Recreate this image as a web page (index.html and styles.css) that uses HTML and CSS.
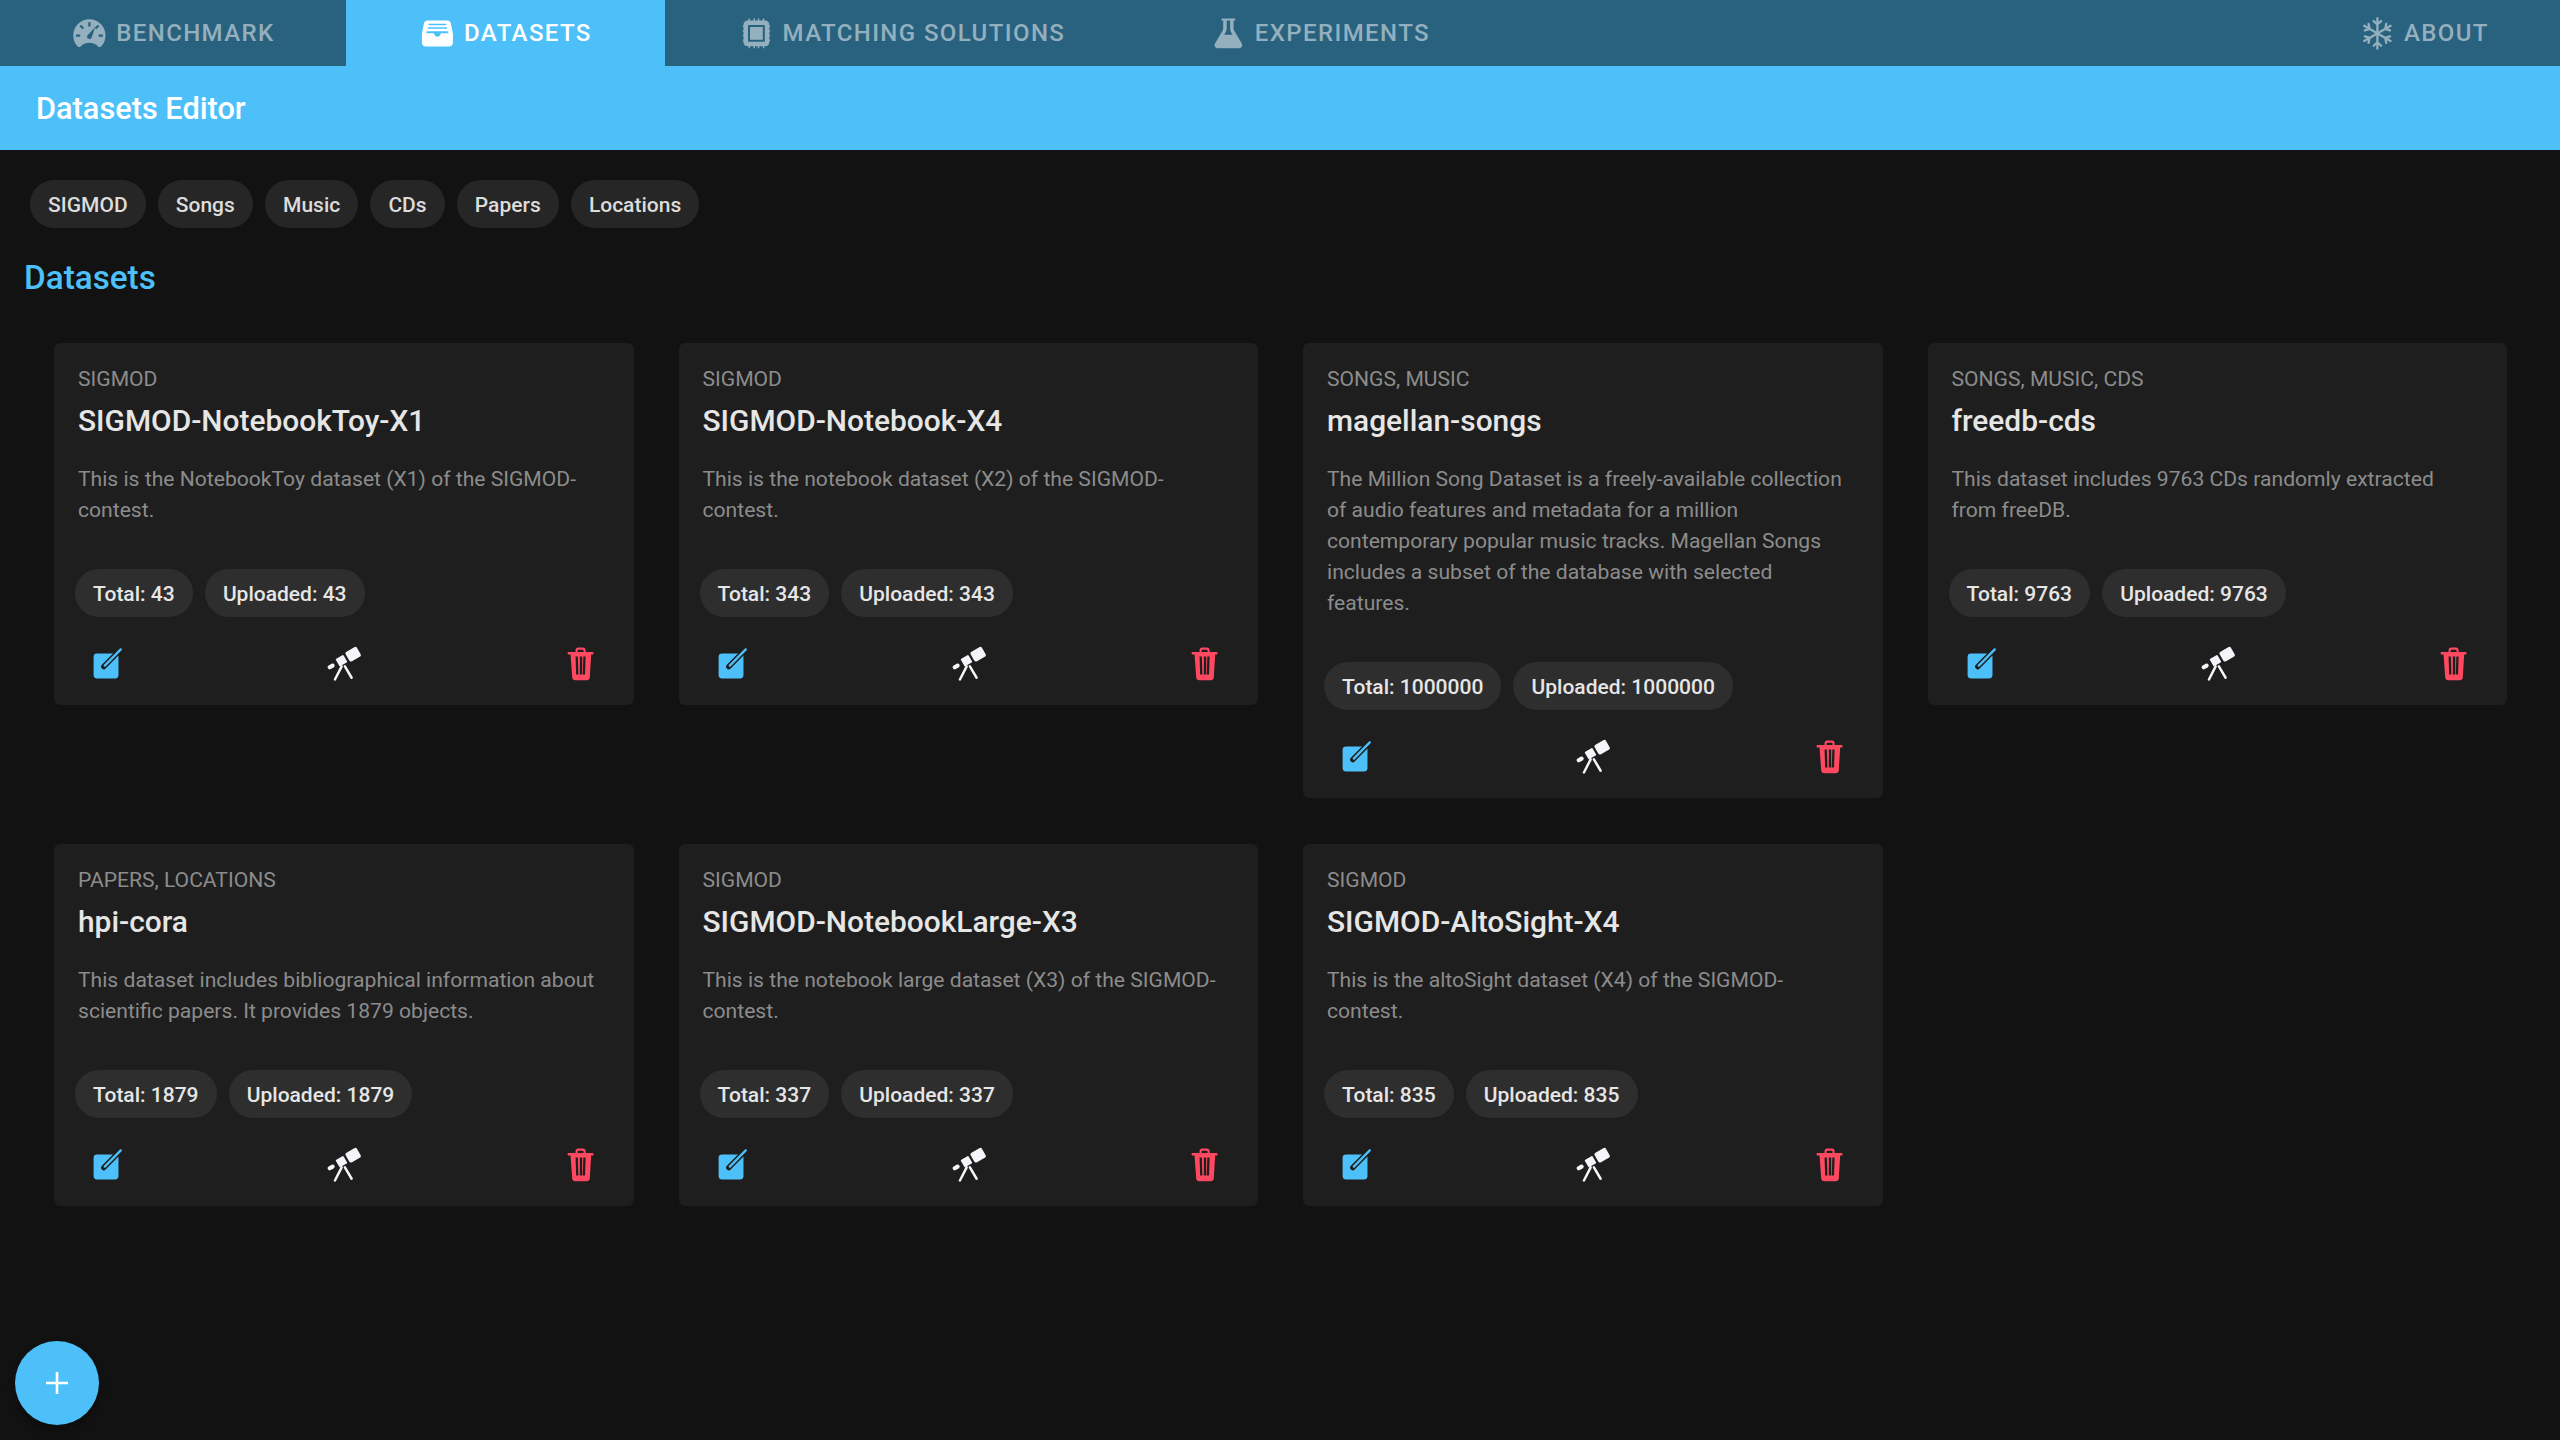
FILE: index.html
```html
<!DOCTYPE html>
<html>
<head>
  <title>Datasets Editor</title>
  <link rel="stylesheet" href="styles.css">
</head>
<body>
  <svg class="defs" width="0" height="0">
    <symbol id="i-speedometer" viewBox="0 0 512 512">
      <path fill-rule="evenodd" d="M256 60C132 60 32 160 32 284c0 58 20 112 58 150 12 12 30 18 44 4 32-34 72-52 122-52s90 18 122 52c14 14 32 8 44-4 38-38 58-92 58-150C480 160 380 60 256 60zM240 100h32v60h-32zM118 158l22-22 42 42-22 22zM372 136l22 22-42 42-22-22zM68 272h60v30H68zM384 272h60v30h-60zM336 166l-48 146c-6 18-26 28-44 20-20-8-28-30-16-48z"/>
    </symbol>
    <symbol id="i-tray" viewBox="0 0 512 512">
      <path fill-rule="evenodd" d="M118 75h276c24 0 42 14 48 36l30 150v120c0 32-24 56-56 56H96c-32 0-56-24-56-56V261l30-150c6-22 24-36 48-36zM132 122v20h248v-20zM122 172v20h268v-20zM104 226v28h102l18 36c3 6 8 10 16 10h32c8 0 13-4 16-10l18-36h102v-28z"/>
    </symbol>
    <symbol id="i-chip" viewBox="0 0 512 512">
      <path d="M146 48h20v40h-20zM216 48h20v40h-20zM276 48h20v40h-20zM346 48h20v40h-20zM146 424h20v40h-20zM216 424h20v40h-20zM276 424h20v40h-20zM346 424h20v40h-20zM68 146h40v20H68zM68 216h40v20H68zM68 276h40v20H68zM68 346h40v20H68zM404 146h40v20h-40zM404 216h40v20h-40zM404 276h40v20h-40zM404 346h40v20h-40z"/>
      <path fill-rule="evenodd" d="M134 76h244c32 0 58 26 58 58v244c0 32-26 58-58 58H134c-32 0-58-26-58-58V134c0-32 26-58 58-58zM139 139v234h234V139zM167 167h178v178H167z"/>
    </symbol>
    <symbol id="i-flask" viewBox="0 0 512 512">
      <path fill-rule="evenodd" d="M172 48h168c8 0 14 6 14 14s-6 14-14 14h-12v110c0 14 4 26 11 37l100 165c24 40 0 76-46 76H119c-46 0-70-36-46-76l100-165c7-11 11-23 11-37V76h-12c-8 0-14-6-14-14s6-14 14-14zM232 76v110c0 24-6 44-19 64l-16 26h118l-16-26c-13-20-19-40-19-64V76z"/>
    </symbol>
    <symbol id="i-snow" viewBox="0 0 512 512">
      <g fill="none" stroke="currentColor" stroke-width="32" stroke-linecap="round" stroke-linejoin="round">
        <path d="M256 44v424M204 84l52 46 52-46M204 428l52-46 52 46"/>
        <path transform="rotate(60 256 256)" d="M256 44v424M204 84l52 46 52-46M204 428l52-46 52 46"/>
        <path transform="rotate(120 256 256)" d="M256 44v424M204 84l52 46 52-46M204 428l52-46 52 46"/>
      </g>
    </symbol>
    <symbol id="i-create" viewBox="0 0 512 512">
      <rect x="67" y="110" width="362" height="362" rx="50"/>
      <path d="M462 50L215 300" fill="none" stroke="#1e1e1e" stroke-width="78" stroke-linecap="round"/>
      <path d="M462 50L230 285" fill="none" stroke="currentColor" stroke-width="34" stroke-linecap="round"/>
    </symbol>
    <symbol id="i-telescope" viewBox="0 0 512 512">
      <rect x="-95" y="-80" width="190" height="160" rx="30" transform="translate(395 120) rotate(-30)"/>
      <rect x="-65" y="-62" width="130" height="124" rx="14" transform="translate(225 212) rotate(-30)"/>
      <rect x="-55" y="-30" width="110" height="60" rx="30" transform="translate(75 298) rotate(-30)"/>
      <path d="M228 296L130 487M275 296l98 166" fill="none" stroke="currentColor" stroke-width="36" stroke-linecap="round"/>
    </symbol>
    <symbol id="i-trash" viewBox="0 0 512 512">
      <path fill-rule="evenodd" d="M78 86h105V60c0-20 16-37 37-37h72c21 0 37 17 37 37v26h105c6 0 10 9 10 19s-4 20-10 20h-24l-20 332c-2 24-20 40-44 40H178c-24 0-42-16-44-40l-24-332H78c-6 0-11-9-11-20s5-19 11-19zM213 86h86V64c0-6-4-10-10-10h-66c-6 0-10 4-10 10zM183 153l8 262h33l-8-262zM245 153v262h34V153zM296 153l-8 262h33l8-262z"/>
    </symbol>
  </svg>

  <nav class="tabs">
    <a class="tab tab-benchmark"><svg class="tab-icon"><use href="#i-speedometer"/></svg>BENCHMARK</a>
    <a class="tab tab-datasets active"><svg class="tab-icon"><use href="#i-tray"/></svg>DATASETS</a>
    <a class="tab tab-solutions"><svg class="tab-icon"><use href="#i-chip"/></svg>MATCHING SOLUTIONS</a>
    <a class="tab tab-experiments"><svg class="tab-icon"><use href="#i-flask"/></svg>EXPERIMENTS</a>
    <a class="tab tab-about"><svg class="tab-icon"><use href="#i-snow"/></svg>ABOUT</a>
  </nav>

  <header class="toolbar">Datasets Editor</header>

  <div class="filters">
    <span class="chip">SIGMOD</span>
    <span class="chip">Songs</span>
    <span class="chip">Music</span>
    <span class="chip">CDs</span>
    <span class="chip">Papers</span>
    <span class="chip">Locations</span>
  </div>

  <h2 class="section-title">Datasets</h2>

  <main class="grid">
    <article class="card">
      <div class="card-sub">SIGMOD</div>
      <h3 class="card-title">SIGMOD-NotebookToy-X1</h3>
      <p class="card-desc">This is the NotebookToy dataset (X1) of the SIGMOD-contest.</p>
      <div class="counts"><span class="chip">Total: 43</span><span class="chip">Uploaded: 43</span></div>
      <div class="actions">
        <button class="btn edit"><svg><use href="#i-create"/></svg></button>
        <button class="btn scope"><svg><use href="#i-telescope"/></svg></button>
        <button class="btn del"><svg><use href="#i-trash"/></svg></button>
      </div>
    </article>
    <article class="card">
      <div class="card-sub">SIGMOD</div>
      <h3 class="card-title">SIGMOD-Notebook-X4</h3>
      <p class="card-desc">This is the notebook dataset (X2) of the SIGMOD-contest.</p>
      <div class="counts"><span class="chip">Total: 343</span><span class="chip">Uploaded: 343</span></div>
      <div class="actions">
        <button class="btn edit"><svg><use href="#i-create"/></svg></button>
        <button class="btn scope"><svg><use href="#i-telescope"/></svg></button>
        <button class="btn del"><svg><use href="#i-trash"/></svg></button>
      </div>
    </article>
    <article class="card">
      <div class="card-sub">SONGS, MUSIC</div>
      <h3 class="card-title">magellan-songs</h3>
      <p class="card-desc">The Million Song Dataset is a freely-available collection of audio features and metadata for a million contemporary popular music tracks. Magellan Songs includes a subset of the database with selected features.</p>
      <div class="counts"><span class="chip">Total: 1000000</span><span class="chip">Uploaded: 1000000</span></div>
      <div class="actions">
        <button class="btn edit"><svg><use href="#i-create"/></svg></button>
        <button class="btn scope"><svg><use href="#i-telescope"/></svg></button>
        <button class="btn del"><svg><use href="#i-trash"/></svg></button>
      </div>
    </article>
    <article class="card">
      <div class="card-sub">SONGS, MUSIC, CDS</div>
      <h3 class="card-title">freedb-cds</h3>
      <p class="card-desc">This dataset includes 9763 CDs randomly extracted from freeDB.</p>
      <div class="counts"><span class="chip">Total: 9763</span><span class="chip">Uploaded: 9763</span></div>
      <div class="actions">
        <button class="btn edit"><svg><use href="#i-create"/></svg></button>
        <button class="btn scope"><svg><use href="#i-telescope"/></svg></button>
        <button class="btn del"><svg><use href="#i-trash"/></svg></button>
      </div>
    </article>
    <article class="card">
      <div class="card-sub">PAPERS, LOCATIONS</div>
      <h3 class="card-title">hpi-cora</h3>
      <p class="card-desc">This dataset includes bibliographical information about scientific papers. It provides 1879 objects.</p>
      <div class="counts"><span class="chip">Total: 1879</span><span class="chip">Uploaded: 1879</span></div>
      <div class="actions">
        <button class="btn edit"><svg><use href="#i-create"/></svg></button>
        <button class="btn scope"><svg><use href="#i-telescope"/></svg></button>
        <button class="btn del"><svg><use href="#i-trash"/></svg></button>
      </div>
    </article>
    <article class="card">
      <div class="card-sub">SIGMOD</div>
      <h3 class="card-title">SIGMOD-NotebookLarge-X3</h3>
      <p class="card-desc">This is the notebook large dataset (X3) of the SIGMOD-contest.</p>
      <div class="counts"><span class="chip">Total: 337</span><span class="chip">Uploaded: 337</span></div>
      <div class="actions">
        <button class="btn edit"><svg><use href="#i-create"/></svg></button>
        <button class="btn scope"><svg><use href="#i-telescope"/></svg></button>
        <button class="btn del"><svg><use href="#i-trash"/></svg></button>
      </div>
    </article>
    <article class="card">
      <div class="card-sub">SIGMOD</div>
      <h3 class="card-title">SIGMOD-AltoSight-X4</h3>
      <p class="card-desc">This is the altoSight dataset (X4) of the SIGMOD-contest.</p>
      <div class="counts"><span class="chip">Total: 835</span><span class="chip">Uploaded: 835</span></div>
      <div class="actions">
        <button class="btn edit"><svg><use href="#i-create"/></svg></button>
        <button class="btn scope"><svg><use href="#i-telescope"/></svg></button>
        <button class="btn del"><svg><use href="#i-trash"/></svg></button>
      </div>
    </article>
  </main>

  <button class="fab"><svg viewBox="0 0 24 24"><path d="M12 1v22M1 12h22"/></svg></button>
</body>
</html>
```

FILE: styles.css
```css
* {
  box-sizing: border-box;
}

body {
  margin: 0;
  min-height: 1440px;
  background: #121212;
  font-family: Roboto, "Liberation Sans", sans-serif;
  overflow: hidden;
}

.defs {
  display: block;
  height: 0;
}

/* top tabs */
.tabs {
  display: flex;
  height: 66px;
  background: #29627e;
}

.tab {
  display: flex;
  align-items: center;
  justify-content: center;
  gap: 8px;
  color: #94b0be;
  font-size: 24px;
  font-weight: 500;
  letter-spacing: 1.4px;
}

.tab-icon {
  width: 36.8px;
  height: 36.8px;
  fill: currentColor;
}

.tab-benchmark { width: 346px; }
.tab-datasets { width: 319px; }
.tab-solutions { width: 473px; }
.tab-experiments { width: 364px; }
.tab-about { margin-left: auto; width: 272px; }

.tab.active {
  background: #4dc0f9;
  color: #fff;
}

.toolbar {
  height: 84px;
  padding: 2px 0 0 36px;
  background: #4dc0f9;
  color: #fff;
  font-size: 30.72px;
  font-weight: 500;
  line-height: 82px;
}

/* chips */
.filters {
  display: flex;
  gap: 12px;
  padding: 30px 0 0 30px;
}

.chip {
  display: inline-flex;
  align-items: center;
  height: 48px;
  padding: 1px 18.1px 0;
  border-radius: 26px;
  background: #262626;
  color: #dcdcdc;
  font-size: 21px;
  font-weight: 500;
}

.section-title {
  margin: 0;
  padding: 30px 0 0 24px;
  color: #4dc0f9;
  font-size: 33.28px;
  font-weight: 500;
  line-height: 40px;
}

/* cards */
.grid {
  display: grid;
  grid-template-columns: repeat(4, 579.5px);
  column-gap: 45px;
  row-gap: 46px;
  align-items: start;
  padding: 45px 0 0 54px;
}

.card {
  padding-top: 24px;
  border-radius: 6px;
  background: #1e1e1e;
}

.card-sub {
  padding: 0 24px;
  color: #8c8c8c;
  font-size: 21.12px;
  line-height: 24px;
}

.card-title {
  margin: 12px 0 0;
  padding: 0 24px;
  color: #e6e6e6;
  font-size: 29.9px;
  font-weight: 500;
  line-height: 36px;
}

.card-desc {
  margin: 24px 0 0;
  padding: 0 24px;
  color: #8c8c8c;
  font-size: 21.12px;
  line-height: 31px;
}

.counts {
  display: flex;
  gap: 12px;
  margin-top: 44px;
  padding-left: 21px;
}

.counts .chip {
  background: #2e2e2e;
  color: #e6e6e6;
}

.actions {
  display: flex;
  justify-content: space-between;
  margin-top: 23px;
  padding: 0 20px 17px 20px;
}

.btn {
  display: flex;
  align-items: center;
  justify-content: center;
  width: 66px;
  height: 48px;
  padding: 0;
  border: 0;
  background: none;
}

.btn svg {
  width: 35.2px;
  height: 35.2px;
  fill: currentColor;
}

.edit { color: #4dc0f9; }
.scope { color: #f4f5f8; }
.del { color: #ff4961; }

.fab {
  position: fixed;
  left: 15px;
  bottom: 15px;
  display: flex;
  align-items: center;
  justify-content: center;
  width: 84px;
  height: 84px;
  padding: 0;
  border: 0;
  border-radius: 50%;
  background: #4dc0f9;
  box-shadow: 0 6px 10px rgba(0, 0, 0, 0.3);
}

.fab svg {
  width: 24px;
  height: 24px;
  fill: none;
  stroke: #fff;
  stroke-width: 2.6;
}
```
